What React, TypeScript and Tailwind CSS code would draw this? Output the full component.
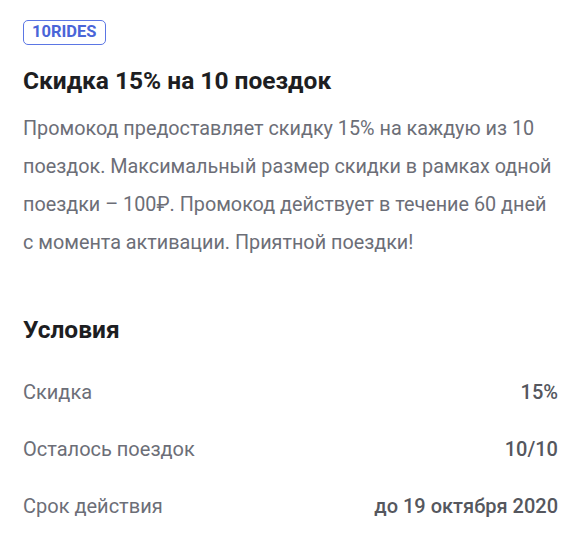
const terms = [
  { label: "Скидка", value: "15%" },
  { label: "Осталось поездок", value: "10/10" },
  { label: "Срок действия", value: "до 19 октября 2020" },
];

export default function App() {
  return (
    <div className="min-h-screen bg-white px-[23px] pt-5 font-['Roboto',sans-serif]">
      <span className="inline-flex h-[25px] items-center rounded-[5px] border-[1.5px] border-[#5b76e4] px-[8px] text-[16.5px] font-bold leading-none text-[#4a65d8]">
        10RIDES
      </span>

      <h1 className="mt-[21px] text-[24.5px] font-bold leading-[30px] text-[#1d1e22]">
        Скидка 15% на 10 поездок
      </h1>

      <p className="mt-[14px] text-[19.8px] leading-[38px] text-[#6c6e77]">
        Промокод предоставляет скидку 15% на каждую из 10 поездок. Максимальный
        размер скидки в рамках одной поездки – 100₽. Промокод действует в
        течение 60 дней с момента активации. Приятной поездки!
      </p>

      <h2 className="mt-[53px] text-[24.5px] font-bold leading-[30px] text-[#1d1e22]">
        Условия
      </h2>

      <div className="mt-[18px] flex flex-col">
        {terms.map((t) => (
          <div
            key={t.label}
            className="flex h-[57px] items-center justify-between text-[20px]"
          >
            <span className="text-[#6c6e77]">{t.label}</span>
            <span className="font-medium text-[#55575e]">{t.value}</span>
          </div>
        ))}
      </div>
    </div>
  );
}
